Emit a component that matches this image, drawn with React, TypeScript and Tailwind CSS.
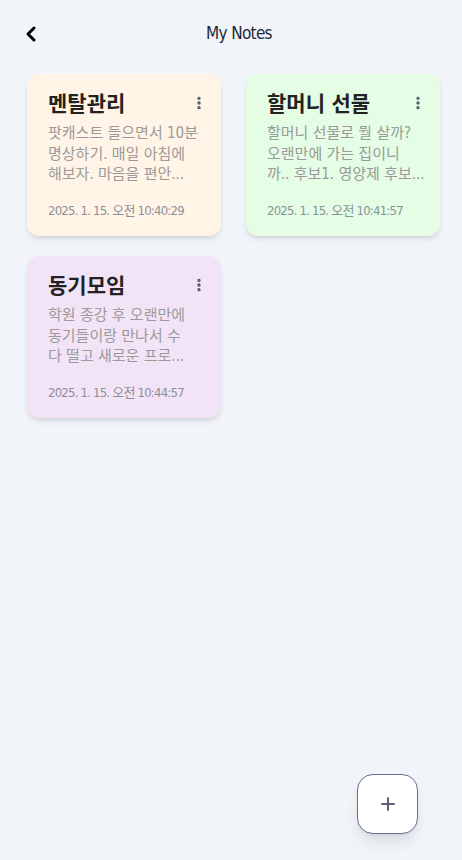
import { ChevronLeft, EllipsisVertical, Plus } from "lucide-react";

type Note = { title: string; lines: string[]; date: string; bg: string };

const notes: Note[] = [
  {
    title: "멘탈관리",
    lines: ["팟캐스트 들으면서 10분", "명상하기. 매일 아침에", "해보자. 마음을 편안..."],
    date: "2025. 1. 15. 오전 10:40:29",
    bg: "bg-[#fff4e5]",
  },
  {
    title: "할머니 선물",
    lines: ["할머니 선물로 뭘 살까?", "오랜만에 가는 집이니", "까.. 후보1. 영양제 후보..."],
    date: "2025. 1. 15. 오전 10:41:57",
    bg: "bg-[#e4fde4]",
  },
  {
    title: "동기모임",
    lines: ["학원 종강 후 오랜만에", "동기들이랑 만나서 수", "다 떨고 새로운 프로..."],
    date: "2025. 1. 15. 오전 10:44:57",
    bg: "bg-[#f3e3f7]",
  },
];

const font = {
  fontFamily: '"DejaVu Sans Condensed", "DejaVu Sans", "Noto Sans CJK KR", sans-serif',
};

const NoteCard = ({ note }: { note: Note }) => (
  <div className={`${note.bg} rounded-xl shadow-md h-[162px] pl-[21px] pr-4 pt-[17px] flex flex-col`}>
    <div className="flex items-start justify-between">
      <h2 className="text-[21px] font-bold text-[#222] leading-[26px]">{note.title}</h2>
      <EllipsisVertical className="w-4 h-4 text-gray-600 mt-[4px] -mr-[2px]" strokeWidth={3} />
    </div>
    <div className="mt-[6px] text-[15px] leading-[20.5px] text-[#9a9a9a] whitespace-nowrap">
      {note.lines.map((l) => (
        <div key={l}>{l}</div>
      ))}
    </div>
    <p className="mt-[16px] text-[13px] text-[#8c909a] tracking-[-0.06em]">{note.date}</p>
  </div>
);

export default function App() {
  return (
    <div className="w-[462px] h-[860px] bg-[#f1f5f9] relative font-stretch-condensed" style={font}>
      <header className="flex items-center h-[68px] px-[19px] relative">
        <ChevronLeft className="w-6 h-6 text-black" strokeWidth={3} />
        <h1 className="absolute left-0 right-0 pl-[16px] text-center text-[17px] tracking-[-0.04em] text-[#1f2937] pointer-events-none">
          My Notes
        </h1>
      </header>
      <div className="grid grid-cols-[194px_194px] gap-x-[25px] gap-y-[20px] pl-[27px] pt-[6px]">
        {notes.map((n) => (
          <NoteCard key={n.title} note={n} />
        ))}
      </div>
      <button className="absolute left-[357px] top-[774px] w-[61px] h-[60px] rounded-2xl bg-white border border-[#6b6b8e] shadow-lg flex items-center justify-center">
        <Plus className="w-5 h-5 text-[#5b5f73]" strokeWidth={2.5} />
      </button>
    </div>
  );
}
